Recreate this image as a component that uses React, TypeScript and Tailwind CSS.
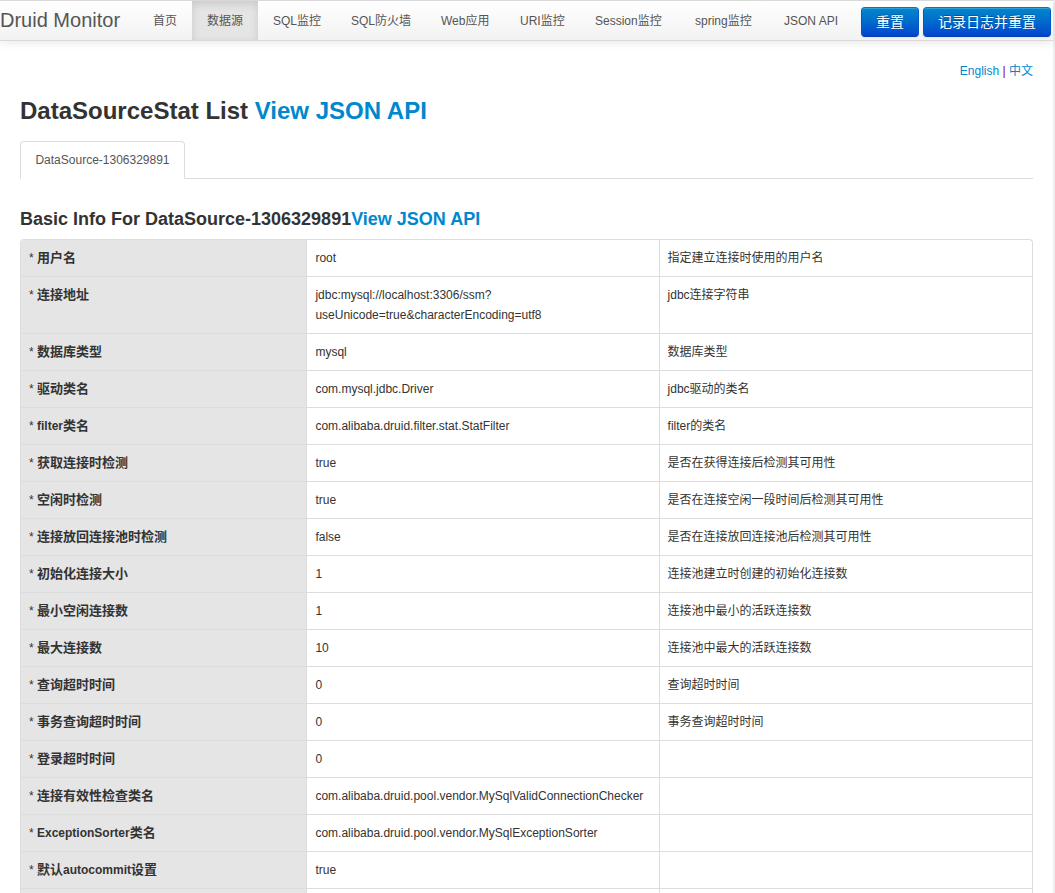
const NAV = [
  '首页',
  '数据源',
  'SQL监控',
  'SQL防火墙',
  'Web应用',
  'URI监控',
  'Session监控',
  'spring监控',
  'JSON API',
];

const ROWS: [string, string, string][] = [
  ['用户名', 'root', '指定建立连接时使用的用户名'],
  ['连接地址', 'jdbc:mysql://localhost:3306/ssm?useUnicode=true&characterEncoding=utf8', 'jdbc连接字符串'],
  ['数据库类型', 'mysql', '数据库类型'],
  ['驱动类名', 'com.mysql.jdbc.Driver', 'jdbc驱动的类名'],
  ['filter类名', 'com.alibaba.druid.filter.stat.StatFilter', 'filter的类名'],
  ['获取连接时检测', 'true', '是否在获得连接后检测其可用性'],
  ['空闲时检测', 'true', '是否在连接空闲一段时间后检测其可用性'],
  ['连接放回连接池时检测', 'false', '是否在连接放回连接池后检测其可用性'],
  ['初始化连接大小', '1', '连接池建立时创建的初始化连接数'],
  ['最小空闲连接数', '1', '连接池中最小的活跃连接数'],
  ['最大连接数', '10', '连接池中最大的活跃连接数'],
  ['查询超时时间', '0', '查询超时时间'],
  ['事务查询超时时间', '0', '事务查询超时时间'],
  ['登录超时时间', '0', ''],
  ['连接有效性检查类名', 'com.alibaba.druid.pool.vendor.MySqlValidConnectionChecker', ''],
  ['ExceptionSorter类名', 'com.alibaba.druid.pool.vendor.MySqlExceptionSorter', ''],
  ['默认autocommit设置', 'true', ''],
];

const buttonClass =
  'h-[30px] cursor-pointer rounded border border-[#0055cc] border-t-[#0077c0] border-b-[#003fb3] bg-linear-to-b from-[#0088cc] to-[#0044cc] px-[14px] text-sm leading-5 whitespace-nowrap text-white shadow-[inset_0_1px_0_rgba(255,255,255,0.2),0_1px_2px_rgba(0,0,0,0.05)] text-shadow-[0_-1px_0_rgba(0,0,0,0.25)]';

function Navbar() {
  return (
    <header className="flex h-[41px] items-stretch border-t border-b border-[#d9d9d9] bg-linear-to-b from-white to-[#f2f2f2] shadow-[0_1px_10px_rgba(0,0,0,0.1)]">
      <a href="#home" className="w-[138px] shrink-0 text-xl leading-[39px] whitespace-nowrap text-[#555]">
        Druid Monitor
      </a>
      <nav className="flex grow">
        <ul className="grid grid-cols-[54px_66px_78px_90px_79px_75px_100px_89px_83px]">
          {NAV.map((label, i) => (
            <li key={label}>
              <a
                href={'#nav-' + i}
                aria-current={i === 1 ? 'page' : undefined}
                className={
                  i === 1
                    ? 'block bg-[#e5e5e5] px-[15px] pt-0.5 leading-[37px] whitespace-nowrap text-[#555] shadow-[inset_0_3px_8px_rgba(0,0,0,0.125)]'
                    : 'block px-[15px] pt-0.5 leading-[37px] whitespace-nowrap text-[#555]'
                }
              >
                {label}
              </a>
            </li>
          ))}
        </ul>
      </nav>
      <div className="flex shrink-0 gap-1 pt-[6px] pr-[2px]">
        <button type="button" className={buttonClass}>重置</button>
        <button type="button" className={buttonClass}>记录日志并重置</button>
      </div>
    </header>
  );
}

/* Latin words inside a label are set one size below the Chinese characters. */
function RowLabel({ text }: { text: string }) {
  return (
    <>
      {text.split(/([A-Za-z]+)/).map((part, i) =>
        i % 2 === 1 ? (
          <span key={i} className="text-xs leading-5">{part}</span>
        ) : (
          part
        ),
      )}
    </>
  );
}

function InfoTable() {
  return (
    <table className="w-full table-fixed border-separate border-spacing-0 overflow-hidden rounded-t border-t border-r border-[#ddd]">
      <colgroup>
        <col className="w-[28.3%]" />
        <col className="w-[34.8%]" />
        <col />
      </colgroup>
      <tbody>
        {ROWS.map(([name, value, note]) => (
          <tr key={name}>
            <th scope="row" className="border-b border-l border-[#ddd] bg-[#e5e5e5] p-2 text-left align-top text-[13px] leading-5">
              <span className="text-xs leading-5 font-normal">* </span>
              <RowLabel text={name} />
            </th>
            <td className="border-b border-l border-[#ddd] p-2 align-top leading-5 wrap-break-word">{value}</td>
            <td className="border-b border-l border-[#ddd] p-2 align-top leading-5">{note}</td>
          </tr>
        ))}
        <tr className="h-1">
          <th scope="row" className="border-l border-[#ddd] bg-[#e5e5e5]" />
          <td className="border-l border-[#ddd]" />
          <td className="border-l border-[#ddd]" />
        </tr>
      </tbody>
    </table>
  );
}

export default function App() {
  return (
    <div className="min-h-screen border-r-2 border-[#eee] bg-white font-['Liberation_Sans','Noto_Sans_CJK_SC',sans-serif] text-xs text-[#333]">
      <Navbar />
      <main className="px-5 pt-5">
        <div className="text-right leading-5 text-[#800080]">
          <a href="#en" className="text-[#0088cc]">English</a> | <a href="#zh" className="text-[#0088cc]">中文</a>
        </div>
        <h1 className="mt-[10px] text-2xl leading-10 font-bold">
          DataSourceStat List <a href="#json" className="text-[#0088cc]">View JSON API</a>
        </h1>
        <div role="tablist" className="mt-[10px] flex border-b border-[#ddd]">
          <button
            type="button"
            role="tab"
            aria-selected="true"
            className="-mb-px h-[38px] min-w-[165px] cursor-pointer rounded-t border border-[#ddd] border-b-white bg-white px-3 leading-5 text-[#555]"
          >
            DataSource-1306329891
          </button>
        </div>
        <h2 className="mt-5 mb-0 text-lg leading-10 font-bold">
          Basic Info For DataSource-1306329891<a href="#basic-json" className="text-[#0088cc]">View JSON API</a>
        </h2>
        <InfoTable />
      </main>
    </div>
  );
}
